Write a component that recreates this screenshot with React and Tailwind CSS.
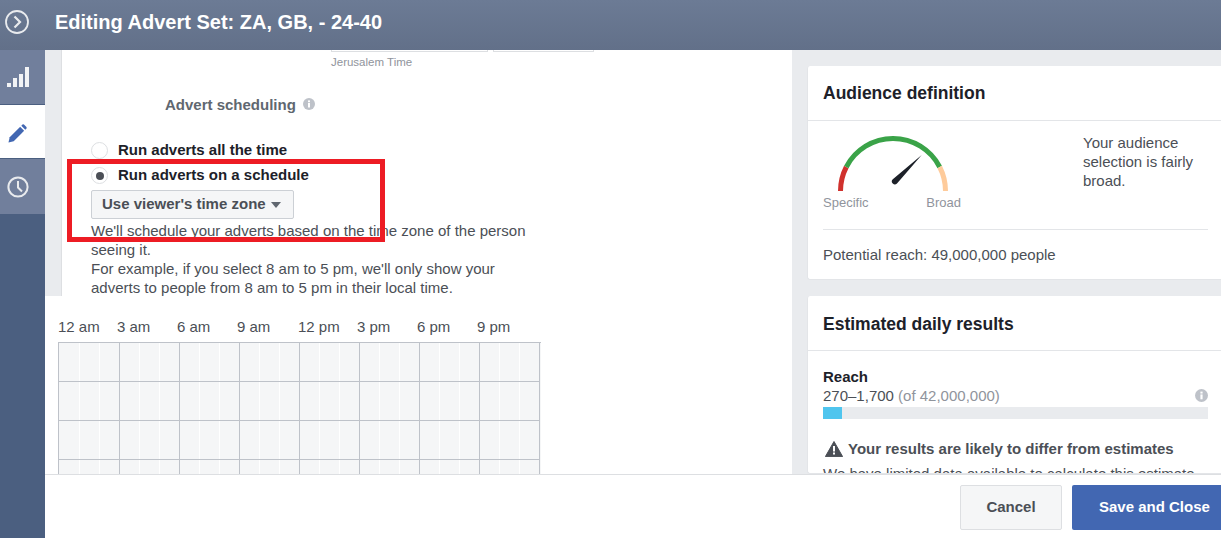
const hours = ["12 am", "3 am", "6 am", "9 am", "12 pm", "3 pm", "6 pm", "9 pm"];

function InfoDot({ className }) {
  return (
    <svg viewBox="0 0 12 12" className={className}>
      <circle cx="6" cy="6" r="6" fill="#bec2c9" />
      <rect x="5" y="5" width="2" height="4.5" fill="#fff" />
      <rect x="5" y="2.4" width="2" height="1.8" fill="#fff" />
    </svg>
  );
}

function Radio({ checked, label }) {
  return (
    <div className="flex items-center h-[19px]">
      <span className="w-[17px] h-[17px] rounded-full bg-white border border-[#dddfe2] flex items-center justify-center shrink-0">
        {checked && <span className="w-[8px] h-[8px] rounded-full bg-[#4b4f56]" />}
      </span>
      <span className="ml-[10px] text-[15px] font-bold text-[#1d2129]">{label}</span>
    </div>
  );
}

function Card({ title, className, titleClass, children }) {
  return (
    <section className={`bg-white rounded-l-[3px] border-b border-l border-[#e3e5e8] ${className}`}>
      <h2 className={`h-[55px] flex items-center pl-[15px] text-[17.5px] font-bold text-[#1d2129] border-b border-[#e3e5e8] ${titleClass}`}>
        {title}
      </h2>
      {children}
    </section>
  );
}

function ScheduleGrid() {
  return (
    <div className="w-[483px] h-[132px] overflow-hidden border-t border-l border-[#bec2c9] bg-[#f5f6f7] grid grid-cols-[61px_repeat(7,60px)] auto-rows-[39px]">
      {Array.from({ length: 32 }).map((_, i) => (
        <div key={i} className={i % 8 === 0 ? "flex pl-[1px] border-r border-b border-[#bec2c9]" : "flex border-r border-b border-[#bec2c9]"}>
          <span className="w-[20px] border-r border-white" />
          <span className="w-[20px] border-r border-white" />
          <span className="flex-1" />
        </div>
      ))}
    </div>
  );
}

export default function App() {
  return (
    <div className="relative w-[1221px] h-[538px] overflow-hidden flex flex-col bg-white font-['Liberation_Sans',Arial,sans-serif]">
      <header className="h-[50px] shrink-0 flex items-center bg-linear-to-b from-[#6c7b95] to-[#627089]">
        <div className="w-[45px] flex justify-start pl-[5px] -mt-[6px]">
          <svg width="24" height="24" viewBox="0 0 24 24" fill="none" stroke="#e9ebee" strokeWidth="1.8">
            <circle cx="12" cy="12" r="11" />
            <path d="M9.5 6.5l5.5 5.5-5.5 5.5" strokeWidth="2.2" />
          </svg>
        </div>
        <h1 className="ml-[10px] -mt-[6px] text-[20px] font-bold text-white">Editing Advert Set: ZA, GB, - 24-40</h1>
      </header>

      <div className="flex-1 min-h-0 flex">
        <nav className="w-[45px] shrink-0 flex flex-col bg-[#4b5f80]">
          <div className="h-[55px] flex items-center justify-center pr-[10px] bg-[#717f9c] border-b border-[#4b5f80]">
            <svg width="22" height="21" viewBox="0 0 22 21" fill="#f2f3f5">
              <rect x="0" y="16" width="4" height="4" />
              <rect x="6" y="11" width="4" height="9" />
              <rect x="12" y="7" width="4" height="13" />
              <rect x="18" y="0" width="4" height="20" />
            </svg>
          </div>
          <div className="h-[54px] flex items-center justify-center pr-[10px] pt-[3px] bg-white border-b border-[#4b5f80]">
            <svg width="19" height="19" viewBox="0 0 20 20" fill="#4267b2">
              <path d="M0.5 19.5 L1.8 14 L12.8 3 L17 7.2 L6 18.2 Z" />
              <path d="M14 1.8 L15.2 0.6 Q16 0 16.8 0.6 L19.4 3.2 Q20 4 19.4 4.8 L18.2 6 Z" />
            </svg>
          </div>
          <div className="h-[55px] flex items-center justify-center pr-[10px] bg-[#717f9c]">
            <svg width="22" height="22" viewBox="0 0 22 22" fill="none" stroke="#e9ebee" strokeWidth="2">
              <circle cx="11" cy="11" r="9.6" />
              <path d="M11 5v6.5l4 4" />
            </svg>
          </div>
        </nav>

        <div className="flex-1 min-w-0 flex flex-col">
          <div className="flex-1 min-h-0 flex overflow-hidden">
            <main className="w-[747px] shrink-0 flex flex-col bg-white">
              <div className="h-[246px] shrink-0 flex bg-[#e9ebee]">
                <div className="ml-[16px] flex-1 bg-white border-l border-[#dddfe2] relative">
                  <div className="ml-[269px] flex gap-[5px]">
                    <span className="w-[157px] h-[2px] bg-white border-b border-x border-[#dddfe2]" />
                    <span className="w-[101px] h-[2px] bg-white border-b border-x border-[#dddfe2]" />
                  </div>
                  <p className="ml-[269px] mt-[3px] text-[11.5px] leading-[14px] text-[#90949c]">Jerusalem Time</p>
                  <div className="mt-[27px] flex items-center">
                    <span className="ml-[103px] text-[15px] leading-[18px] font-bold text-[#606770]">Advert scheduling</span>
                    <InfoDot className="ml-[7px] -mt-[2px] w-[12px] h-[12px]" />
                  </div>
                  <div className="ml-[29px] mt-[27px] w-[440px]">
                    <Radio label="Run adverts all the time" />
                    <div className="mt-[6px]"><Radio checked label="Run adverts on a schedule" /></div>
                    <button className="mt-[5px] w-[203px] h-[29px] flex items-center pl-[10px] rounded-[2px] bg-[#f5f6f7] border border-[#ccd0d5] text-[15px] font-bold text-[#4b4f56]">
                      Use viewer's time zone
                      <span className="ml-[5px] mt-[1px] w-0 h-0 border-x-[5px] border-x-transparent border-t-[6px] border-t-[#606770]" />
                    </button>
                    <p className="mt-[2px] text-[15px] leading-[19px] text-[#4b4f56]">
                      We'll schedule your adverts based on the time zone of the person seeing it.<br />
                      For example, if you select 8 am to 5 pm, we'll only show your<br />
                      adverts to people from 8 am to 5 pm in their local time.
                    </p>
                  </div>
                </div>
              </div>
              <div className="pl-[13px] pt-[22px]">
                <div className="grid grid-cols-[59px_repeat(7,60px)] h-[18px] text-[15px] leading-[18px] text-[#4b4f56]">
                  {hours.map((h, i) => (
                    <span key={h} className={i === 4 ? "ml-[1px]" : ""}>{h}</span>
                  ))}
                </div>
                <div className="mt-[6px]"><ScheduleGrid /></div>
              </div>
            </main>

            <aside className="flex-1 min-w-0 bg-[#e9ebee] pl-[15px] pt-[16px] flex flex-col gap-[16px]">
              <Card title="Audience definition" className="h-[214px] shrink-0">
                <div className="h-[108px] pl-[15px]">
                  <div className="flex">
                    <div className="w-[260px]">
                      <svg width="115" height="62" viewBox="0 0 115 62" fill="none" strokeWidth="5" className="ml-[12px] mt-[9px]">
                        <path d="M5.5 61 A52.5 52.5 0 0 1 11.3 37" stroke="#d0312d" />
                        <path d="M11.3 37 A52.5 52.5 0 0 1 104.7 37" stroke="#3aa348" />
                        <path d="M104.7 37 A52.5 52.5 0 0 1 110.5 61" stroke="#fecb9b" />
                        <path d="M86.7 25 L62 53.5 A3 3 0 0 1 57.8 49.2 Z" fill="#1d2129" stroke="none" />
                      </svg>
                      <div className="w-[138px] flex justify-between text-[13px] leading-[16px] text-[#90949c] mt-[3px]">
                        <span>Specific</span>
                        <span>Broad</span>
                      </div>
                    </div>
                    <p className="w-[125px] mt-[12px] text-[15px] leading-[19px] text-[#4b4f56]">
                      Your audience selection is fairly broad.
                    </p>
                  </div>
                </div>
                <div className="ml-[15px] mr-[13px] border-t border-[#e3e5e8] pt-[15px] text-[15px] leading-[19px] text-[#4b4f56]">
                  Potential reach: 49,000,000 people
                </div>
              </Card>

              <Card title="Estimated daily results" titleClass="pt-[2px]" className="flex-1 min-h-0 overflow-hidden">
                <div className="pl-[15px] pr-[13px] pt-[17px]">
                  <p className="text-[15px] leading-[18px] font-bold text-[#1d2129]">Reach</p>
                  <div className="flex items-center justify-between h-[21px] text-[15px] text-[#4b4f56]">
                    <span>270–1,700 <span className="text-[#90949c]">(of 42,000,000)</span></span>
                    <InfoDot className="w-[13px] h-[13px] -mt-[2px]" />
                  </div>
                  <div className="h-[12px] bg-[#e9ebee]">
                    <div className="w-[19px] h-full bg-[#4fc5ee]" />
                  </div>
                  <div className="mt-[20px] flex items-center h-[20px] text-[15px] font-bold text-[#4b4f56]">
                    <svg width="18" height="16" viewBox="0 0 18 16" className="ml-[2px] mr-[5px]">
                      <path d="M9 0.5 L17.6 15.6 L0.4 15.6 Z" fill="#4b4f56" stroke="#4b4f56" strokeLinejoin="round" />
                      <rect x="8" y="5" width="2" height="5.5" fill="#fff" />
                      <rect x="8" y="11.5" width="2" height="2" fill="#fff" />
                    </svg>
                    Your results are likely to differ from estimates
                  </div>
                  <p className="mt-[5px] text-[15px] leading-[19px] text-[#4b4f56] whitespace-nowrap">We have limited data available to calculate this estimate</p>
                </div>
              </Card>
            </aside>
          </div>

          <footer className="h-[64px] shrink-0 bg-white border-t border-[#dddfe2] flex items-start justify-end pt-[10px] gap-[10px] relative">
            <button className="w-[102px] h-[45px] rounded-[2px] bg-[#f5f6f7] border border-[#dddfe2] text-[15px] font-bold text-[#4b4f56]">Cancel</button>
            <button className="w-[149px] h-[45px] rounded-l-[2px] bg-[#4267b2] text-[15px] font-bold text-white text-left pl-[27px]">Save and Close</button>
          </footer>
        </div>
      </div>

      <div className="absolute left-[67px] top-[159px] w-[318px] h-[83px] border-[5px] border-[#ed1c24] pointer-events-none" />
    </div>
  );
}
